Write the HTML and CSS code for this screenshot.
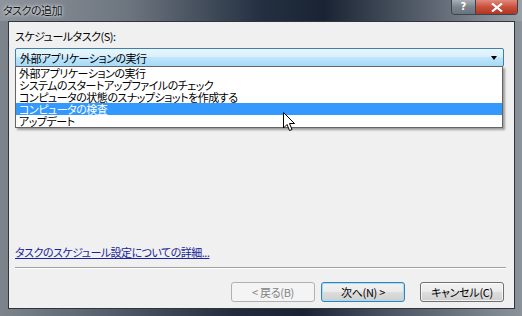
FILE: index.html
```html
<!DOCTYPE html>
<html lang="ja">
<head>
    <meta charset="UTF-8">
    <title>タスクの追加</title>
    <link rel="stylesheet" href="styles.css">
</head>
<body>
    <div class="window">
        <div class="titlebar">
            <span class="title">タスクの追加</span>
            <div class="caption-buttons">
                <span class="cap-help">?</span>
                <span class="cap-close">
                    <svg width="14" height="9" viewBox="0 0 14 9">
                        <path d="M2 0.5 L12 8.5 M12 0.5 L2 8.5" stroke="#fff" stroke-width="2.2"/>
                    </svg>
                </span>
            </div>
        </div>
        <div class="client">
            <label class="field-label">スケジュールタスク(S):</label>
            <div class="combo-wrap">
                <div class="combo">
                    <span>外部アプリケーションの実行</span>
                    <span class="arrow"></span>
                </div>
                <ul class="dropdown">
                    <li>外部アプリケーションの実行</li>
                    <li>システムのスタートアップファイルのチェック</li>
                    <li>コンピュータの状態のスナップショットを作成する</li>
                    <li class="selected">コンピュータの検査</li>
                    <li>アップデート</li>
                </ul>
                <svg class="cursor" width="13" height="20" viewBox="0 0 13 20">
                    <path d="M0.5 0.5 L0.5 16 L4 12.5 L6.5 18.5 L9 17.5 L6.5 11.5 L11.5 11.5 Z" fill="#fff" stroke="#000" stroke-width="1"/>
                </svg>
            </div>
            <div class="spacer"></div>
            <a class="help-link" href="#">タスクのスケジュール設定についての詳細...</a>
            <hr class="separator">
            <div class="buttons">
                <button class="btn" disabled>&lt; 戻る(B)</button>
                <button class="btn btn-default">次へ(N) &gt;</button>
                <button class="btn">キャンセル(C)</button>
            </div>
        </div>
    </div>
</body>
</html>
```

FILE: styles.css
```css
:root {
    --face: #f0f0f0;
    --blue: #3399ff;
    --link: #18249a;
}

body {
    margin: 0;
    padding: 0;
    font-family: "Noto Sans CJK JP", "Noto Sans", sans-serif;
    font-size: 11px;
    letter-spacing: -0.5px;
    font-feature-settings: "palt";
    color: #000;
}

.window {
    width: 522px;
    height: 316px;
    display: flex;
    flex-direction: column;
    background: linear-gradient(90deg, #7d848c 0%, #56606c 20%, #222c3a 45%, #1a2332 58%, #4c5562 75%, #8b929a 100%);
}

.titlebar {
    height: 21px;
    display: flex;
    align-items: flex-start;
    padding-left: 3px;
    background: linear-gradient(90deg, #8e959c 0%, #6c747e 25%, #243041 50%, #1a2333 62%, #59626e 82%, #9aa1a8 100%);
}

.title {
    margin-top: 2px;
    line-height: 16px;
    color: #111;
    text-shadow: 0 0 4px #e8ecf0, 0 0 2px #e8ecf0;
}

.caption-buttons {
    margin-left: auto;
    margin-right: 4px;
    display: flex;
    height: 14px;
    border: 1px solid #3d434a;
    border-top: 0;
    border-radius: 0 0 4px 4px;
    overflow: hidden;
}

.cap-help {
    width: 23px;
    text-align: center;
    font-family: "DejaVu Sans", sans-serif;
    font-weight: bold;
    font-size: 10px;
    letter-spacing: 0;
    line-height: 13px;
    color: #fff;
    background: linear-gradient(#a8aeb5, #7b838c 50%, #6a727b);
    border-right: 1px solid #3d434a;
}

.cap-close {
    width: 41px;
    display: flex;
    align-items: center;
    justify-content: center;
    background: linear-gradient(#e08a7c, #c9503c 50%, #b23520);
}

.client {
    flex: 1;
    margin: 0 7px 7px 8px;
    background: var(--face);
    border: 1px solid #2f353c;
    display: flex;
    flex-direction: column;
    padding: 5px 10px 6px 6px;
}

.field-label {
    line-height: 14px;
    margin-top: 2px;
}

.combo-wrap {
    position: relative;
    margin-top: 5px;
}

.combo {
    height: 17px;
    border: 1px solid #3c7fb1;
    border-radius: 2px;
    background: linear-gradient(#eaf6fd 0%, #d9f0fc 45%, #bee6fd 50%, #a7d9f5 100%);
    display: flex;
    align-items: center;
    padding-left: 4px;
    padding-right: 6px;
    line-height: 14px;
}

.arrow {
    margin-left: auto;
    width: 0;
    height: 0;
    border-left: 3.5px solid transparent;
    border-right: 3.5px solid transparent;
    border-top: 4px solid #000;
}

.dropdown {
    position: absolute;
    top: 18px;
    left: 0;
    width: 486px;
    margin: 0;
    padding: 0;
    list-style: none;
    background: #fff;
    border: 1px solid #646464;
    box-shadow: 2px 2px 2px rgba(0, 0, 0, 0.35);
}

.dropdown li {
    height: 12px;
    line-height: 12px;
    padding-left: 3px;
}

.dropdown li.selected {
    background: var(--blue);
    color: #fff;
}

.cursor {
    position: absolute;
    left: 268px;
    top: 64px;
}

.spacer {
    flex: 1;
}

.help-link {
    color: var(--link);
    line-height: 14px;
    margin-bottom: 8px;
}

.separator {
    margin: 0 -2px 13px 0;
    border: 0;
    border-top: 1px solid #a0a0a0;
    border-bottom: 1px solid #fff;
}

.buttons {
    display: flex;
    justify-content: flex-end;
    gap: 6px;
}

.btn {
    width: 84px;
    height: 20px;
    padding: 0;
    font-family: inherit;
    font-size: 11px;
    letter-spacing: -0.3px;
    font-feature-settings: "palt";
    line-height: 14px;
    border: 1px solid #707070;
    border-radius: 3px;
    background: linear-gradient(#f2f2f2 0%, #ebebeb 48%, #dddddd 52%, #cfcfcf 100%);
    box-shadow: inset 0 0 0 1px rgba(255, 255, 255, 0.7);
    color: #000;
}

.btn + .btn:last-child {
    margin-left: 9px;
}

.btn:disabled {
    border-color: #adb2b5;
    background: #f4f4f4;
    color: #838383;
    box-shadow: none;
}

.btn-default {
    border-color: #3c7fb1;
    box-shadow: inset 0 0 0 1px #9ee0f8;
}
```
